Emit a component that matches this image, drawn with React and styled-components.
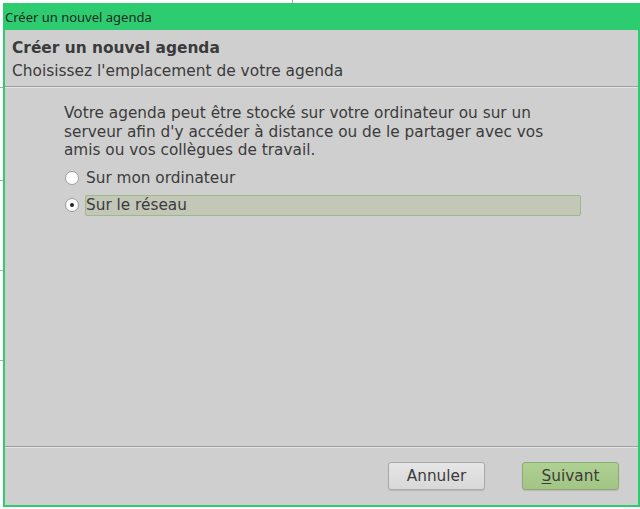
import React from "react";
import styled, { createGlobalStyle } from "styled-components";

const Global = createGlobalStyle`
  html, body { margin: 0; padding: 0; background: #ffffff; }
  body { font-family: "DejaVu Sans", sans-serif; }
`;

const Stage = styled.div`
  position: relative;
  width: 640px;
  height: 509px;
  padding: 3px 0 2px 3px;
  box-sizing: border-box;
  overflow: hidden;
`;

const BgLine = styled.div`
  position: absolute;
  background: #a9a9a9;
  left: ${(p) => p.$x}px;
  top: ${(p) => p.$y}px;
  width: ${(p) => p.$w}px;
  height: ${(p) => p.$h}px;
`;

const Window = styled.div`
  position: relative;
  width: 637px;
  height: 504px;
  box-sizing: border-box;
  display: flex;
  flex-direction: column;
  background: #cfcfcf;
  border: 2px solid #2ecc71;
  border-top: none;
`;

const TitleBar = styled.div`
  height: 27px;
  background: #2ecc71;
  display: flex;
  align-items: center;
  margin: 0 -2px;
  padding: 0 2px;
  font-family: "Noto Sans", sans-serif;
  font-size: 13px;
  color: #1e2a22;
`;

const Header = styled.div`
  height: 57px;
  box-sizing: border-box;
  padding: 8px 0 0 7px;
  display: flex;
  flex-direction: column;
  gap: 3px;
  border-bottom: 1px solid #9e9e9e;
  box-shadow: 0 1px 0 #e4e4e4;
  color: #3b3b3b;
`;

const HeadTitle = styled.div`
  font-weight: bold;
  font-size: 15.4px;
  line-height: 20px;
`;

const HeadSub = styled.div`
  font-size: 15.4px;
  line-height: 20px;
`;

const Content = styled.div`
  flex: 1;
  padding: 17px 0 0 59px;
  color: #3b3b3b;
  font-size: 15.3px;
`;

const Intro = styled.p`
  margin: 0 0 8px 0;
  width: 500px;
  line-height: 18.5px;
`;

const OptionRow = styled.label`
  display: flex;
  align-items: center;
  gap: 6px;
  height: 21px;
  margin-left: 1px;
  margin-bottom: 6px;
`;

const Radio = styled.span`
  width: 14px;
  height: 14px;
  border-radius: 50%;
  box-sizing: border-box;
  border: 1px solid #9a9a9a;
  background: #ffffff;
  display: flex;
  align-items: center;
  justify-content: center;
  flex: none;
  &::after {
    content: "";
    width: 4px;
    height: 4px;
    border-radius: 50%;
    background: #222;
    display: ${(p) => (p.$checked ? "block" : "none")};
  }
`;

const OptionText = styled.span`
  flex: none;
  width: ${(p) => (p.$focused ? "496px" : "auto")};
  height: 21px;
  box-sizing: border-box;
  line-height: 19px;
  padding-left: 0;
  border-radius: 2px;
  background: ${(p) => (p.$focused ? "#c3c7b8" : "transparent")};
  border: 1px solid ${(p) => (p.$focused ? "#9db987" : "transparent")};
`;

const Footer = styled.div`
  height: 59px;
  box-sizing: border-box;
  border-top: 1px solid #9e9e9e;
  box-shadow: inset 0 1px 0 #e4e4e4;
  display: flex;
  justify-content: flex-end;
  align-items: flex-start;
  gap: 37px;
  padding: 15px 19px 0 0;
`;

const Button = styled.button`
  width: 97px;
  height: 28px;
  border-radius: 3px;
  font-family: "DejaVu Sans", sans-serif;
  font-size: 15.3px;
  color: #3b3b3b;
  border: 1px solid ${(p) => (p.$primary ? "#8ea875" : "#a9a9a9")};
  background: ${(p) =>
    p.$primary
      ? "linear-gradient(#aed092, #a2c585)"
      : "linear-gradient(#e6e6e6, #d8d8d8)"};
  box-shadow: 0 1px 1px rgba(0,0,0,0.12);
  padding: 0;
  u { text-decoration: underline; text-underline-offset: 2px; }
`;

export default function App() {
  return (
    <>
      <Global />
      <Stage>
        <BgLine $x={292} $y={0} $w={1} $h={3} />
        <BgLine $x={0} $y={180} $w={3} $h={1} />
        <BgLine $x={0} $y={270} $w={3} $h={1} />
        <BgLine $x={0} $y={360} $w={3} $h={1} />
        <BgLine $x={0} $y={87} $w={3} $h={1} />
        <Window>
          <TitleBar>Créer un nouvel agenda</TitleBar>
          <Header>
            <HeadTitle>Créer un nouvel agenda</HeadTitle>
            <HeadSub>Choisissez l'emplacement de votre agenda</HeadSub>
          </Header>
          <Content>
            <Intro>
              Votre agenda peut être stocké sur votre ordinateur ou sur un
              serveur afin d'y accéder à distance ou de le partager avec vos
              amis ou vos collègues de travail.
            </Intro>
            <OptionRow>
              <Radio />
              <OptionText>Sur mon ordinateur</OptionText>
            </OptionRow>
            <OptionRow>
              <Radio $checked />
              <OptionText $focused>Sur le réseau</OptionText>
            </OptionRow>
          </Content>
          <Footer>
            <Button>Annuler</Button>
            <Button $primary>
              <u>S</u>uivant
            </Button>
          </Footer>
        </Window>
      </Stage>
    </>
  );
}
